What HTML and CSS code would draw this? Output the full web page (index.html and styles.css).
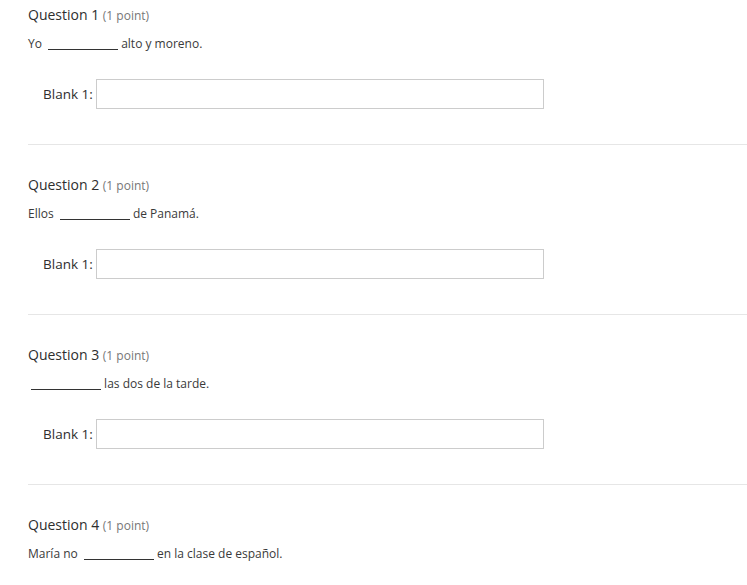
FILE: index.html
```html
<!DOCTYPE html>
<html lang="es">
<head>
<meta charset="utf-8">
<title>Quiz</title>
<link rel="stylesheet" href="styles.css">
</head>
<body>
<main class="quiz">
  <section class="question">
    <h2 class="q-title">Question 1 <span class="q-points">(1 point)</span></h2>
    <p class="q-text">Yo <span class="blank"></span> alto y moreno.</p>
    <div class="answer-row">
      <label class="answer-label">Blank 1:</label>
      <input class="answer-input" type="text">
    </div>
  </section>
  <section class="question">
    <h2 class="q-title">Question 2 <span class="q-points">(1 point)</span></h2>
    <p class="q-text">Ellos <span class="blank"></span> de Panamá.</p>
    <div class="answer-row">
      <label class="answer-label">Blank 1:</label>
      <input class="answer-input" type="text">
    </div>
  </section>
  <section class="question">
    <h2 class="q-title">Question 3 <span class="q-points">(1 point)</span></h2>
    <p class="q-text"><span class="blank"></span> las dos de la tarde.</p>
    <div class="answer-row">
      <label class="answer-label">Blank 1:</label>
      <input class="answer-input" type="text">
    </div>
  </section>
  <section class="question">
    <h2 class="q-title">Question 4 <span class="q-points">(1 point)</span></h2>
    <p class="q-text">María no <span class="blank"></span> en la clase de español.</p>
    <div class="answer-row">
      <label class="answer-label">Blank 1:</label>
      <input class="answer-input" type="text">
    </div>
  </section>
</main>
</body>
</html>
```
FILE: styles.css
```css
html, body {
  margin: 0;
  padding: 0;
  background: #ffffff;
}
body {
  font-family: "Open Sans", "Liberation Sans", sans-serif;
  color: #333333;
}
.quiz {
  padding: 5px 0 0 28px;
}
.question {
  padding-bottom: 35px;
  margin-bottom: 30px;
  border-bottom: 1px solid #e6e6e6;
}
.q-title {
  margin: 0;
  font-size: 14px;
  font-weight: 400;
  line-height: 20px;
  color: #2e2e2e;
}
.q-points {
  font-size: 12px;
  color: #777777;
}
.q-text {
  margin: 8px 0 0;
  height: 20px;
  font-size: 12px;
  line-height: 20px;
  color: #3a3a3a;
}
.blank {
  display: inline-block;
  width: 70px;
  height: 0;
  margin-left: 3px;
  border-bottom: 1px solid #333333;
  vertical-align: -2px;
}
.answer-row {
  display: flex;
  align-items: center;
  gap: 3px;
  margin-top: 25px;
  padding-left: 15px;
}
.answer-label {
  font-size: 13.5px;
  color: #2e2e2e;
}
.answer-input {
  box-sizing: border-box;
  width: 448px;
  height: 30px;
  margin: 0;
  border: 1px solid #cccccc;
  background: #ffffff;
  font-family: inherit;
}
```
